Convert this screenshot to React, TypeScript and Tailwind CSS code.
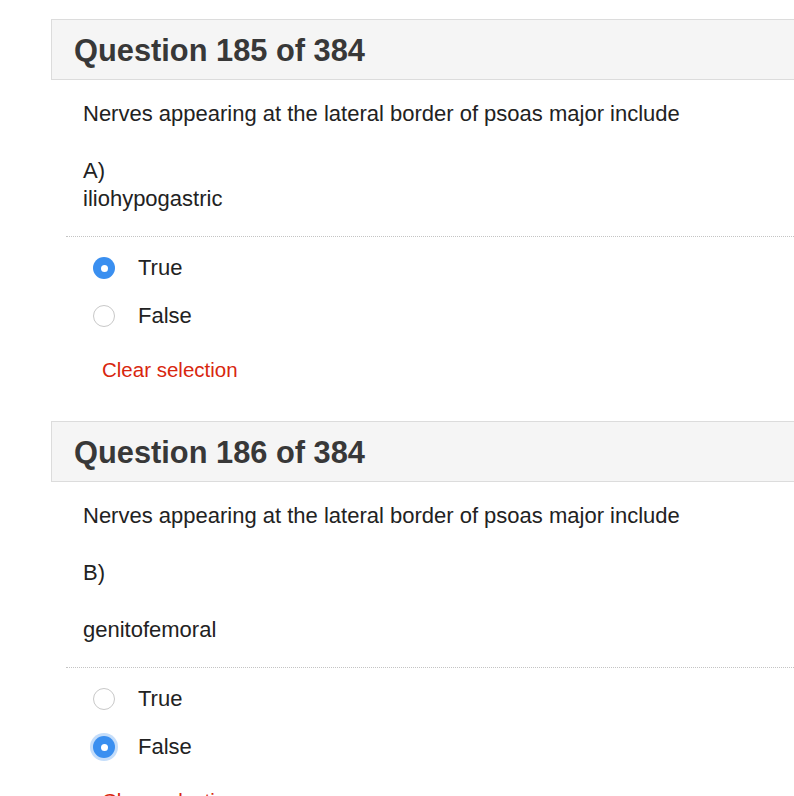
type Choice = "True" | "False";

interface QuestionProps {
  readonly number: number;
  readonly total: number;
  readonly stem: string;
  readonly letter: string;
  readonly option: string;
  readonly spaced?: boolean;
  readonly selected: Choice;
  readonly focused?: boolean;
}

function Radio({ checked, focused }: { checked: boolean; focused?: boolean }) {
  if (checked) {
    return (
      <span
        className={
          "flex h-[22px] w-[22px] items-center justify-center rounded-full bg-[#3a8ff0] " +
          (focused ? "shadow-[0_0_0_3px_rgba(58,143,240,0.3)]" : "")
        }
      >
        <span className="h-[7px] w-[7px] rounded-full bg-white" />
      </span>
    );
  }
  return <span className="h-[22px] w-[22px] rounded-full border border-[#c8c8c8] bg-white" />;
}

function Question({ number, total, stem, letter, option, spaced, selected, focused }: QuestionProps) {
  return (
    <section>
      <div className="ml-[51px] flex h-[61px] items-center border border-r-0 border-[#dcdcdc] bg-[#f5f5f5] pl-[22px] pt-[3px]">
        <h2 className="text-[30.8px] font-bold leading-none text-[#383838]">
          Question {number} of {total}
        </h2>
      </div>
      <div className="pl-[83px] pt-[22px] text-[22px] leading-[24px] text-[#222]">
        <p>{stem}</p>
        <div className="mt-[33px]">
          <p>{letter}</p>
          <p className={spaced ? "mt-[33px]" : "mt-[4px]"}>{option}</p>
        </div>
      </div>
      <div className="ml-[66px] mt-[25px] border-t border-dotted border-[#c4c4c4]" />
      <div className="flex flex-col gap-[24px] pl-[93px] pt-[19px] text-[22px] leading-[24px] text-[#222]">
        {(["True", "False"] as Choice[]).map((c) => (
          <label key={c} className="flex items-center gap-[23px]">
            <Radio checked={selected === c} focused={focused} />
            <span>{c}</span>
          </label>
        ))}
      </div>
      <button className="ml-[102px] mt-[30px] text-[20.5px] leading-[24px] text-[#d8260e]">
        Clear selection
      </button>
    </section>
  );
}

export default function App() {
  return (
    <div className="min-h-[796px] overflow-hidden bg-white pt-[19px] font-['Liberation_Sans',Arial,sans-serif]">
      <div className="flex flex-col gap-[37px]">
        <Question
          number={185}
          total={384}
          stem="Nerves appearing at the lateral border of psoas major include"
          letter="A)"
          option="iliohypogastric"
          selected="True"
        />
        <Question
          number={186}
          total={384}
          stem="Nerves appearing at the lateral border of psoas major include"
          letter="B)"
          option="genitofemoral"
          spaced
          selected="False"
          focused
        />
      </div>
    </div>
  );
}
